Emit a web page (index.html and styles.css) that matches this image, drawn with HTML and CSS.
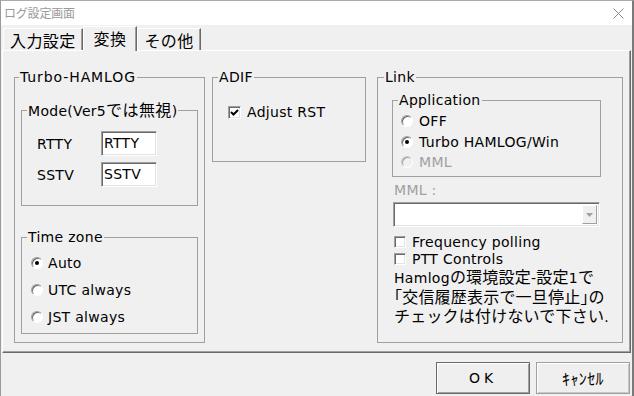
FILE: index.html
```html
<!DOCTYPE html>
<html lang="ja">
<head>
    <meta charset="UTF-8">
    <title>ログ設定画面</title>
    <link rel="stylesheet" href="styles.css">
</head>
<body>
    <div class="window">
        <div class="titlebar">
            <span class="title">ログ設定画面</span>
            <svg class="close" width="11" height="11" viewBox="0 0 11 11">
                <path d="M0.5 0.5 L10.5 10.5 M10.5 0.5 L0.5 10.5" stroke="#8a8a8a" stroke-width="1" fill="none"/>
            </svg>
        </div>

        <div class="tabs">
            <div class="tab">入力設定</div>
            <div class="tab active">変換</div>
            <div class="tab">その他</div>
        </div>

        <div class="panel">
            <fieldset class="group turbo">
                <legend>Turbo-HAMLOG</legend>
                <div class="turbo-body">
                    <fieldset class="group mode">
                        <legend>Mode(Ver5<span class="jp">では無視</span>)</legend>
                        <div class="mode-body">
                            <div class="field">
                                <span class="field-label">RTTY</span>
                                <span class="textbox">RTTY</span>
                            </div>
                            <div class="field">
                                <span class="field-label">SSTV</span>
                                <span class="textbox">SSTV</span>
                            </div>
                        </div>
                    </fieldset>
                    <fieldset class="group timezone">
                        <legend>Time zone</legend>
                        <div class="timezone-body">
                            <div class="radio-row"><span class="radio checked"></span>Auto</div>
                            <div class="radio-row"><span class="radio"></span>UTC always</div>
                            <div class="radio-row"><span class="radio"></span>JST always</div>
                        </div>
                    </fieldset>
                </div>
            </fieldset>

            <fieldset class="group adif">
                <legend>ADIF</legend>
                <div class="adif-body">
                    <div class="check-row">
                        <span class="checkbox">
                            <svg width="9" height="9" viewBox="0 0 9 9"><path d="M1 4 L3.5 6.5 L8 2" stroke="#000" stroke-width="2" fill="none"/></svg>
                        </span>
                        Adjust RST
                    </div>
                </div>
            </fieldset>

            <fieldset class="group link">
                <legend>Link</legend>
                <div class="link-body">
                    <fieldset class="group application">
                        <legend>Application</legend>
                        <div class="application-body">
                            <div class="app-row"><span class="radio"></span>OFF</div>
                            <div class="app-row"><span class="radio checked"></span>Turbo HAMLOG/Win</div>
                            <div class="app-row disabled"><span class="radio"></span>MML</div>
                        </div>
                    </fieldset>
                    <div class="mml-label">MML :</div>
                    <div class="combo">
                        <span class="combo-button">
                            <svg width="7" height="4" viewBox="0 0 7 4"><path d="M0 0 H7 L3.5 4 Z" fill="#a0a0a0"/></svg>
                        </span>
                    </div>
                    <div class="options">
                        <div class="option-row"><span class="checkbox"></span>Frequency polling</div>
                        <div class="option-row"><span class="checkbox"></span>PTT Controls</div>
                    </div>
                    <div class="note">
                        <div class="note-line">Hamlog<span class="jp">の環境設定</span>-<span class="jp">設定</span>1<span class="jp">で</span></div>
                        <div class="note-line"><span class="jp">｢交信履歴表示で一旦停止｣の</span></div>
                        <div class="note-line"><span class="jp">チェックは付けないで下さい</span>.</div>
                    </div>
                </div>
            </fieldset>
        </div>

        <div class="footer">
            <button class="btn default">OK</button>
            <button class="btn jp">ｷｬﾝｾﾙ</button>
        </div>
    </div>
</body>
</html>
```

FILE: styles.css
```css
body {
    margin: 0;
    background-color: #f0f0f0;
    font-family: 'DejaVu Sans', 'Noto Sans CJK JP', sans-serif;
    font-size: 14px;
    line-height: 16px;
    letter-spacing: 0.3px;
    color: #000;
}
.jp {
    font-family: 'Noto Sans CJK JP', sans-serif;
    font-size: 16px;
    letter-spacing: 0.4px;
}
.window {
    width: 634px;
    height: 396px;
    box-sizing: border-box;
    border-top: 1px solid #aaaaaa;
    border-left: 1px solid #9a9a9a;
    border-right: 2px solid #7a7a7a;
    background-color: #f0f0f0;
    display: flex;
    flex-direction: column;
    overflow: hidden;
}
.titlebar {
    height: 24px;
    flex: none;
    background-color: #fff;
    display: flex;
    align-items: center;
    justify-content: space-between;
    padding: 0 8px 0 3px;
}
.title {
    font-family: 'Noto Sans CJK JP', sans-serif;
    font-size: 12px;
    letter-spacing: -0.2px;
    color: #999;
}
.tabs {
    height: 25px;
    flex: none;
    display: flex;
    align-items: flex-end;
    padding-left: 2px;
    font-family: 'Noto Sans CJK JP', sans-serif;
    font-size: 16px;
    letter-spacing: 0.4px;
}
.tab {
    height: 22px;
    box-sizing: border-box;
    padding: 0 6px;
    line-height: 22px;
    border-top: 1px solid #fff;
    border-left: 1px solid #fff;
    border-right: 1px solid #696969;
    box-shadow: inset -1px 0 0 #a0a0a0;
}
.tab.active {
    height: 25px;
    margin-bottom: -1px;
    padding: 0 10px;
    line-height: 23px;
    background-color: #f0f0f0;
    position: relative;
}
.panel {
    height: 303px;
    flex: none;
    box-sizing: border-box;
    margin: 0 1px;
    border: 1px solid;
    border-color: #fff #696969 #696969 #fff;
    box-shadow: inset -1px -1px 0 #a0a0a0;
    padding: 18px 6px 9px 11px;
    display: flex;
    align-items: stretch;
}

/* group boxes */
.group {
    margin: 0;
    padding: 0;
    min-width: 0;
    box-sizing: border-box;
    border: 1px solid #a0a0a0;
}
.group > legend {
    padding: 0 1px;
    margin-left: 5px;
    height: 16px;
    line-height: 16px;
    white-space: nowrap;
}
.group > legend .jp {
    line-height: 14px;
}
.turbo {
    width: 191px;
    margin-right: 7px;
}
.turbo > legend {
    margin-left: 4px;
    letter-spacing: 0.9px;
}
.turbo-body {
    padding: 17px 6px 8px;
}
.mode-body {
    padding: 13px 0 18px 15px;
    display: flex;
    flex-direction: column;
    gap: 6px;
}
.field {
    display: flex;
    align-items: center;
    height: 25px;
}
.field-label {
    width: 64px;
}
.textbox {
    width: 56px;
    height: 25px;
    box-sizing: border-box;
    padding-left: 2px;
    line-height: 23px;
    background-color: #fff;
    border: 1px solid;
    border-color: #a0a0a0 #fff #fff #a0a0a0;
    box-shadow: inset 1px 1px 0 #696969, inset -1px -1px 0 #e3e3e3;
}
.timezone {
    margin-top: 23px;
}
.timezone-body {
    padding: 4px 0 3px 9px;
}
.radio-row {
    height: 27px;
    display: flex;
    align-items: center;
}
.radio {
    width: 12px;
    height: 12px;
    box-sizing: border-box;
    border-radius: 50%;
    border: 1px solid;
    border-color: #a0a0a0 #fff #fff #a0a0a0;
    box-shadow: inset 1px 1px 0 #696969;
    background-color: #fff;
    margin-right: 5px;
    display: flex;
    align-items: center;
    justify-content: center;
    flex: none;
}
.radio.checked::after {
    content: '';
    width: 4px;
    height: 4px;
    border-radius: 50%;
    background-color: #000;
}
.adif {
    width: 154px;
    height: 93px;
    align-self: flex-start;
    margin-right: 11px;
}
.adif-body {
    padding: 18px 0 0 15px;
}
.check-row {
    height: 18px;
    display: flex;
    align-items: center;
}
.checkbox {
    width: 13px;
    height: 13px;
    box-sizing: border-box;
    border: 1px solid;
    border-color: #a0a0a0 #fff #fff #a0a0a0;
    box-shadow: inset 1px 1px 0 #696969, inset -1px -1px 0 #e3e3e3;
    background-color: #fff;
    margin-right: 6px;
    display: flex;
    align-items: center;
    justify-content: center;
    flex: none;
}
.link {
    width: 246px;
}
.link > legend {
    margin-left: 6px;
}
.link-body {
    padding: 7px 21px 0 14px;
}
.application {
    width: 209px;
}
.application-body {
    padding: 3px 0 4px 8px;
}
.app-row {
    height: 20px;
    display: flex;
    align-items: center;
}
.app-row:nth-child(2) {
    height: 21px;
}
.app-row .radio {
    margin-right: 6px;
}
.app-row.disabled {
    color: #a0a0a0;
}
.app-row.disabled .radio {
    background-color: #f0f0f0;
    border-color: #c8c8c8 #fff #fff #c8c8c8;
    box-shadow: inset 1px 1px 0 #a0a0a0;
}
.mml-label {
    margin: 5px 0 0 2px;
    height: 16px;
    color: #a0a0a0;
}
.combo {
    width: 207px;
    height: 25px;
    box-sizing: border-box;
    margin: 4px 0 0 1px;
    background-color: #fff;
    border: 1px solid;
    border-color: #a0a0a0 #fff #fff #a0a0a0;
    box-shadow: inset 1px 1px 0 #696969, inset -1px -1px 0 #e3e3e3;
    display: flex;
    justify-content: flex-end;
    padding: 2px 2px 2px 0;
}
.combo-button {
    width: 15px;
    box-sizing: border-box;
    background-color: #f0f0f0;
    border: 1px solid;
    border-color: #fff #a0a0a0 #a0a0a0 #fff;
    display: flex;
    align-items: center;
    justify-content: center;
}
.options {
    margin-top: 6px;
}
.option-row {
    height: 17px;
    display: flex;
    align-items: center;
    padding-left: 2px;
}
.option-row .checkbox {
    width: 12px;
    height: 12px;
    margin-right: 6px;
}
.note {
    margin-top: 2px;
    padding-left: 2px;
    white-space: nowrap;
}
.note-line {
    height: 19.5px;
    line-height: 19.5px;
    overflow: visible;
}
.note .jp {
    letter-spacing: 0.2px;
    line-height: 14px;
}
.footer {
    flex: 1;
    display: flex;
    justify-content: flex-end;
    align-items: flex-start;
    gap: 6px;
    padding: 9px 2px 0 0;
}
.btn {
    width: 94px;
    height: 32px;
    margin: 0;
    font-family: 'DejaVu Sans', sans-serif;
    font-size: 14px;
    color: #000;
    background-color: #efefef;
    border: 1px solid #a0a0a0;
    box-shadow: inset 1px 1px 0 #fff, inset -1px -1px 0 #c8c8c8;
}
.btn.jp {
    font-family: 'Noto Sans CJK JP', sans-serif;
    font-size: 16px;
}
.btn.default {
    border-color: #696969;
    box-shadow: inset 1px 1px 0 #fff, inset -1px -1px 0 #a0a0a0;
    letter-spacing: 4px;
}
```
